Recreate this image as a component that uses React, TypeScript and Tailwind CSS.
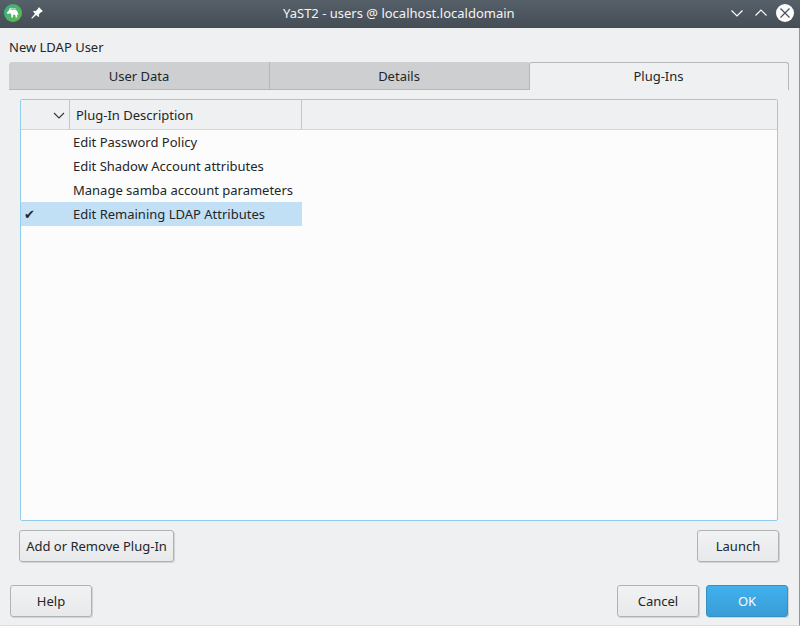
import React from 'react';

const plugins = [
  { name: 'Edit Password Policy', active: false },
  { name: 'Edit Shadow Account attributes', active: false },
  { name: 'Manage samba account parameters', active: false },
  { name: 'Edit Remaining LDAP Attributes', active: true },
];

function Button({ children, className = 'w-[82px]', primary = false }: { children: React.ReactNode; className?: string; primary?: boolean }) {
  const tone = primary
    ? 'border-[#3590c4] bg-linear-to-b from-[#3fb1ee] to-[#3a9cd6] text-[#fcfcfc]'
    : 'border-[#b0b2b4] bg-linear-to-b from-[#f1f2f3] to-[#e8e9ea]';
  return (
    <button className={`h-8 rounded-[3px] border shadow-[1px_1px_0_rgba(0,0,0,0.12)] flex items-center justify-center whitespace-nowrap ${tone} ${className}`}>
      {children}
    </button>
  );
}

function TitleBar() {
  return (
    <header className="h-7 shrink-0 flex items-center bg-linear-to-b from-[#566069] to-[#454d55] text-[#f2f4f5]">
      <div className="w-[283px] flex items-center pl-1">
        <svg className="w-[18px] h-[18px] -mt-[2px]" viewBox="0 0 18 18">
          <defs>
            <linearGradient id="logo" x1="0" y1="0" x2="1" y2="1">
              <stop offset="0" stopColor="#35ad8c" />
              <stop offset="1" stopColor="#63bd45" />
            </linearGradient>
          </defs>
          <circle cx="9" cy="9" r="9" fill="url(#logo)" />
          <path d="M3 8.3 L4.6 7 L5 5.6 L7 5.2 L8.2 6 L11 5.6 L13 6.8 L14.6 10.6 L13.8 11 L13.2 9.6 L13.3 13.4 L11.7 13.4 L11.2 10.8 L9.2 10.8 L8.9 13.4 L7.4 13.4 L7.2 10 L5.6 9.3 L4 10 L3.2 9.6 Z" fill="#fff" />
          <path d="M5.2 5 L7.5 4.2 L9.5 5 L11.5 4.6" fill="none" stroke="#fff" strokeWidth=".7" />
        </svg>
        <svg className="w-3 h-3 ml-[9px] -mt-[2px]" viewBox="0 0 12 12">
          <path d="M8 .3 L11.7 4 L11 5 L10.2 5 L7.7 7.5 L8.2 9.2 L7.5 9.9 L5.2 8 L1 11.8 L.3 11.1 L4 6.8 L2.1 4.5 L2.8 3.8 L4.5 4.3 L7 1.8 L7 1 Z" fill="#fff" />
        </svg>
      </div>
      <h1 className="flex-1 leading-[18px] -mt-[2px]">YaST2 - users @ localhost.localdomain</h1>
      <svg className="w-[70px] h-7 mr-[5px]" viewBox="0 0 70 28" fill="none" stroke="#fcfcfc" strokeWidth="1.2">
        <path d="M6.5 10.5 L12 16 L17.5 10.5 M30.5 15.5 L36 10 L41.5 15.5" />
        <circle cx="60" cy="13" r="9" fill="#fcfcfc" stroke="none" />
        <path d="M55.5 8.5 L64.5 17.5 M64.5 8.5 L55.5 17.5" stroke="#475057" />
      </svg>
    </header>
  );
}

export default function App() {
  return (
    <div className="w-[800px] h-[626px] overflow-hidden flex flex-col bg-[#eff0f1] text-[#232629] text-[13px] leading-[18px] font-['Noto_Sans',sans-serif]">
      <TitleBar />
      <main className="flex-1 flex flex-col border-r border-[#929496] border-b border-b-[#dcddde] pl-[9px] pr-[10px]">
        <div className="h-[34px] pt-[10px]">New LDAP User</div>
        <nav className="h-7 flex text-center leading-7">
          <div className="w-[261px] rounded-tl-[3px] border-r border-b border-[#b5b7b8] bg-[#cecfd0]">User Data</div>
          <div className="w-[259px] pr-px border-b border-[#b5b7b8] bg-[#cecfd0]">Details</div>
          <div className="flex-1 pr-px border-x border-t border-[#b5b7b8] rounded-t-[3px] leading-[26px]">Plug-Ins</div>
        </nav>
        <section className="mt-[9px] ml-[11px] w-[758px] h-[422px] border border-[#8fcdea] rounded-[2px] bg-[#fcfcfc] overflow-hidden">
          <div className="h-[30px] flex items-center bg-[#eff0f1] border-b border-[#d4d5d6]">
            <div className="w-[49px] h-full border-r border-[#c4c6c7] flex items-center justify-end pr-1 pt-[2px]">
              <svg className="w-3 h-[7px]" viewBox="0 0 12 7" fill="none" stroke="#33373a" strokeWidth="1.1">
                <path d="M1 1 L6 6 L11 1" />
              </svg>
            </div>
            <div className="w-[232px] h-full border-r border-[#c4c6c7] pl-[6px] pt-[6px]">Plug-In Description</div>
          </div>
          {plugins.map((p) => (
            <div key={p.name} className={`w-[281px] h-6 flex items-center ${p.active ? 'bg-[#c1dff5]' : ''}`}>
              <span className="w-[52px] pl-[3px] pt-[2px] font-['DejaVu_Sans']">{p.active ? '✔' : ''}</span>
              <span className="whitespace-nowrap">{p.name}</span>
            </div>
          ))}
        </section>
        <div className="mt-[9px] ml-[10px] mr-[10px] flex justify-between">
          <Button className="w-[155px]">Add or Remove Plug-In</Button>
          <Button>Launch</Button>
        </div>
        <footer className="mt-[23px] pl-[1px] pr-[1px] flex">
          <Button>Help</Button>
          <Button className="w-[82px] ml-auto">Cancel</Button>
          <Button className="w-[82px] ml-[7px]" primary>OK</Button>
        </footer>
      </main>
    </div>
  );
}
